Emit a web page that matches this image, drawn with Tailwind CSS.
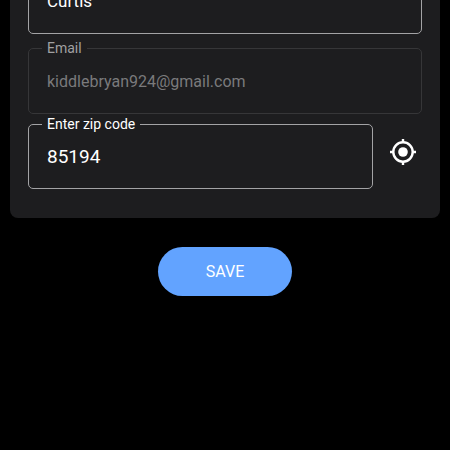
<!DOCTYPE html>
<html lang="en">
<head>
<meta charset="utf-8">
<meta name="viewport" content="width=device-width, initial-scale=1">
<title>Profile</title>
<script src="https://cdn.jsdelivr.net/npm/@tailwindcss/browser@4"></script>
</head>
<body class="min-h-screen overflow-hidden bg-black font-[Roboto,sans-serif] text-white">
<form class="flex flex-col items-center px-2.5">
  <section class="-mt-12 flex w-full flex-col rounded-lg bg-[#1d1d1f] px-[18px] pt-4 pb-[29px]">
    <input type="text" aria-label="Name" value="Curtis" class="h-[66px] w-full rounded-[5px] border border-[#a3a3a5] px-[18px] text-[17px] outline-none">
    <div class="relative mt-3.5">
      <label for="email" class="absolute -top-2 left-3.5 bg-[#1d1d1f] px-[5px] text-sm leading-4 text-[#a0a0a2]">Email</label>
      <input id="email" type="email" value="kiddlebryan924@gmail.com" disabled class="h-[66px] w-full rounded-[5px] border border-[#363638] px-[18px] text-base text-[#7a7a7c]">
    </div>
    <div class="mt-2.5 flex items-center">
      <div class="relative grow">
        <label for="zip" class="absolute -top-2 left-3.5 bg-[#1d1d1f] px-[5px] text-sm leading-4">Enter zip code</label>
        <input id="zip" type="text" value="85194" class="h-[65px] w-full rounded-[5px] border border-[#a3a3a5] px-[18px] text-[19px] outline-none">
      </div>
      <button type="button" aria-label="Use my location" class="mr-[3px] -mt-2.5 ml-3.5 flex size-8 items-center justify-center">
        <svg class="size-7" viewBox="0 0 28 28" fill="none" stroke="#fff" aria-hidden="true">
          <circle cx="14" cy="14" r="9.7" stroke-width="2.4"/>
          <circle cx="14" cy="14" r="4.8" fill="#fff" stroke="none"/>
          <path d="M14 1v4M14 23v4M1 14h4M23 14h4" stroke-width="2.4"/>
        </svg>
      </button>
    </div>
  </section>
  <button type="submit" class="mt-[29px] h-[49px] w-[134px] rounded-full bg-[#62a3ff] text-base">SAVE</button>
</form>
</body>
</html>
